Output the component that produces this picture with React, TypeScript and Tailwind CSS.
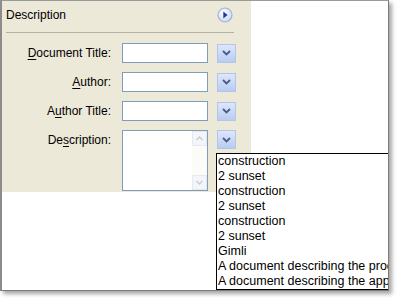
const Chevron = () => (
  <svg width="9" height="6" viewBox="0 0 9 6">
    <path d="M1 1l3.5 3.5L8 1" stroke="#4a5d86" strokeWidth="1.8" fill="none" />
  </svg>
);

const DropButton = () => (
  <div className="w-[19px] h-[19px] border border-[#b3c5e8] bg-gradient-to-b from-[#dde7fb] to-[#b8ccf3] flex items-center justify-center">
    <Chevron />
  </div>
);

const InfoIcon = () => (
  <svg width="16" height="16" viewBox="0 0 16 16">
    <defs>
      <radialGradient id="g" cx="0.4" cy="0.35" r="0.7">
        <stop offset="0" stopColor="#ffffff" />
        <stop offset="1" stopColor="#c9d6f2" />
      </radialGradient>
    </defs>
    <circle cx="8" cy="8" r="7" fill="url(#g)" stroke="#9fb4e0" strokeWidth="1.2" />
    <path d="M6.3 4.5L10.6 8L6.3 11.5Z" fill="#1c3f94" />
  </svg>
);

const Label = ({ pre, u, post }: { pre: string; u: string; post: string }) => (
  <span className="w-[105px] text-right text-[12px] leading-[20px] text-black">
    {pre}
    <span className="underline underline-offset-2">{u}</span>
    {post}
  </span>
);

const Row = ({ pre, u, post }: { pre: string; u: string; post: string }) => (
  <div className="flex items-center h-[20px]">
    <Label pre={pre} u={u} post={post} />
    <div className="ml-[11px] w-[86px] h-[20px] border border-[#7f9db9] bg-white" />
    <div className="ml-[9px]">
      <DropButton />
    </div>
  </div>
);

const items = [
  "construction",
  "2 sunset",
  "construction",
  "2 sunset",
  "construction",
  "2 sunset",
  "Gimli",
  "A document describing the process of building",
  "A document describing the approach",
];

export default function App() {
  return (
    <div className="w-[400px] h-[300px] bg-white relative" style={{ fontFamily: '"Liberation Sans", Arial, sans-serif' }}>
      <div className="w-[389px] h-[291px] border-l-2 border-t border-r border-b border-l-[#8c8c8c] border-t-[#9a9a9a] border-r-[#7a7a7a] border-b-[#7a7a7a] bg-white relative overflow-hidden shadow-[3px_3px_4px_rgba(0,0,0,0.35)]">
        <div className="w-[249px] h-[191px] bg-[#ece9d8] px-[4px] pt-[5px]">
          <div className="flex items-center justify-between h-[18px] pr-[14px]">
            <span className="text-[12px] text-black">Description</span>
            <InfoIcon />
          </div>
          <div className="mt-[8px] w-[228px] border-t border-[#b4b2a4]" />
          <div className="mt-[10px] flex flex-col gap-[9px] pr-[6px]">
            <Row pre="" u="D" post="ocument Title:" />
            <Row pre="" u="A" post="uthor:" />
            <Row pre="A" u="u" post="thor Title:" />
            <div className="flex items-start">
              <Label pre="De" u="s" post="cription:" />
              <div className="ml-[11px] w-[86px] h-[61px] border border-[#7f9db9] bg-white flex justify-end">
                <div className="w-[15px] h-full bg-[#fbfbf8] flex flex-col justify-between">
                  <div className="h-[15px] border border-[#e4e9f2] bg-[#f3f5f9] flex items-center justify-center">
                    <svg width="7" height="5" viewBox="0 0 7 5"><path d="M0.5 4L3.5 1L6.5 4" stroke="#c6cdd9" strokeWidth="1.5" fill="none" /></svg>
                  </div>
                  <div className="h-[15px] border border-[#e4e9f2] bg-[#f3f5f9] flex items-center justify-center">
                    <svg width="7" height="5" viewBox="0 0 7 5"><path d="M0.5 1L3.5 4L6.5 1" stroke="#c6cdd9" strokeWidth="1.5" fill="none" /></svg>
                  </div>
                </div>
              </div>
              <div className="ml-[9px]">
                <DropButton />
              </div>
            </div>
          </div>
        </div>
        <div className="absolute left-[214px] top-[152px] w-[190px] h-[137px] border border-black bg-white overflow-hidden">
          {items.map((t, i) => (
            <div key={i} className="pl-[1px] text-[12.5px] leading-[15px] text-black whitespace-nowrap">
              {t}
            </div>
          ))}
        </div>
      </div>
    </div>
  );
}
